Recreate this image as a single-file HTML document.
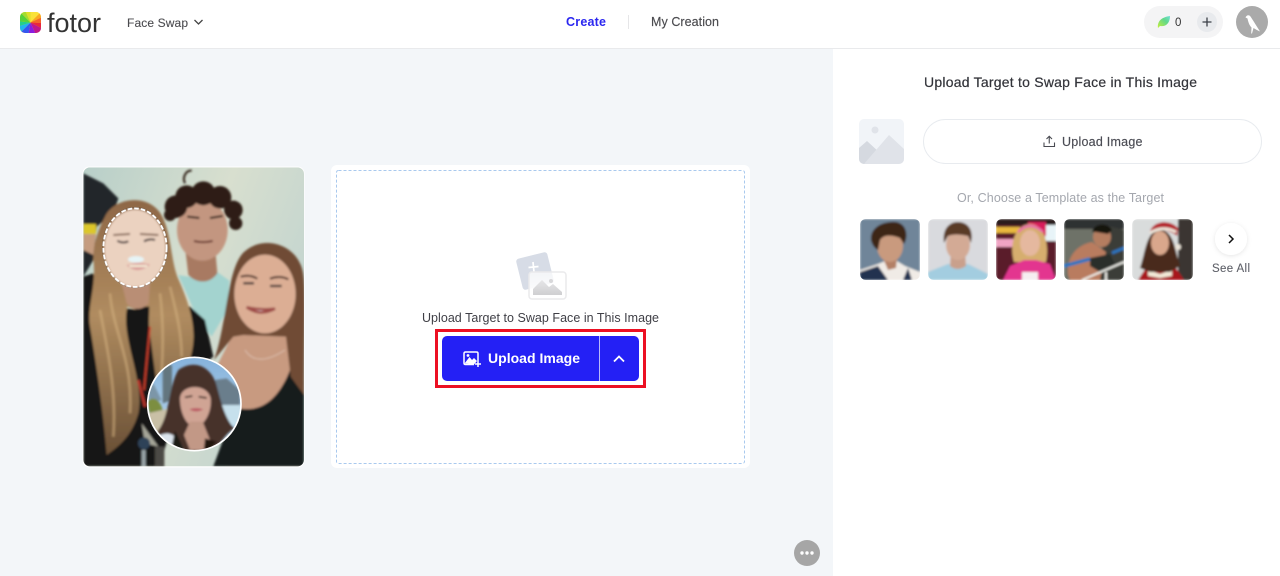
<!DOCTYPE html>
<html>
<head>
<meta charset="utf-8">
<style>
html,body{margin:0;padding:0;width:1280px;height:576px;overflow:hidden;background:#f3f6f9}
svg{display:block}
text{font-family:"Liberation Sans",sans-serif}
</style>
</head>
<body>
<svg width="1280" height="576" viewBox="0 0 1280 576" xmlns="http://www.w3.org/2000/svg">
<defs>
<filter id="b1" x="-10%" y="-10%" width="120%" height="120%"><feGaussianBlur stdDeviation="3"/></filter>
<filter id="b2" x="-10%" y="-10%" width="120%" height="120%"><feGaussianBlur stdDeviation="1"/></filter>
<filter id="sh" x="-30%" y="-30%" width="160%" height="160%"><feDropShadow dx="0" dy="1" stdDeviation="2.5" flood-color="#000" flood-opacity=".1"/></filter>
<clipPath id="ph"><rect x="40" y="22" width="662" height="897" rx="20"/></clipPath>
<clipPath id="cc"><circle cx="373" cy="732" r="140"/></clipPath>
<clipPath id="lg"><rect x="20" y="12" width="21" height="21" rx="5"/></clipPath>
<clipPath id="t1"><rect x="860" y="219" width="60" height="61" rx="6"/></clipPath>
<clipPath id="t2"><rect x="928" y="219" width="60" height="61" rx="6"/></clipPath>
<clipPath id="t3"><rect x="996" y="219" width="60" height="61" rx="6"/></clipPath>
<clipPath id="t4"><rect x="1064" y="219" width="60" height="61" rx="6"/></clipPath>
<clipPath id="t5"><rect x="1132" y="219" width="61" height="61" rx="6"/></clipPath>
<clipPath id="ph2"><rect x="859" y="119" width="45" height="45" rx="5"/></clipPath>
<linearGradient id="sky" x1="0" y1="0" x2="1" y2=".5"><stop offset="0" stop-color="#b8cfc9"/><stop offset=".55" stop-color="#d8dfcf"/><stop offset="1" stop-color="#c2d4cf"/></linearGradient>
<linearGradient id="hair" x1="0" y1="0" x2="0" y2="1"><stop offset="0" stop-color="#8e6746"/><stop offset=".45" stop-color="#b08c60"/><stop offset="1" stop-color="#6a5036"/></linearGradient>
<linearGradient id="csky" x1="0" y1="0" x2="0" y2="1"><stop offset="0" stop-color="#85b2dc"/><stop offset="1" stop-color="#c2dcec"/></linearGradient>
<linearGradient id="leaf" x1="0" y1="1" x2="1" y2="0"><stop offset="0" stop-color="#c4ef3c"/><stop offset=".6" stop-color="#62d88a"/><stop offset="1" stop-color="#6fe0d8"/></linearGradient>
<linearGradient id="fade" x1="0" y1="0" x2="0" y2="1"><stop offset="0" stop-color="#e6e6e8"/><stop offset="1" stop-color="#cfcfd1"/></linearGradient>
<linearGradient id="frame" x1="0" y1="0" x2="0" y2="1"><stop offset="0" stop-color="#fff" stop-opacity=".7"/><stop offset="1" stop-color="#fff"/></linearGradient>
</defs>

<!-- backgrounds -->
<rect width="1280" height="576" fill="#f3f6f9"/>
<rect x="833" y="48" width="447" height="528" fill="#fff"/>
<rect width="1280" height="48" fill="#fff"/>
<rect y="48" width="1280" height="1" fill="#e9eaec"/>

<!-- logo -->
<g clip-path="url(#lg)">
<rect x="20" y="12" width="21" height="21" fill="#f5d327"/>
<path d="M30.5 22.5L30.5 8L45 8Z" fill="#f9e23a"/>
<path d="M30.5 22.5L45 8L45 16Z" fill="#f9a825"/>
<path d="M30.5 22.5L45 16L45 23Z" fill="#f5652a"/>
<path d="M30.5 22.5L45 23L45 30Z" fill="#e9283c"/>
<path d="M30.5 22.5L45 30L45 37L37 37Z" fill="#c0158c"/>
<path d="M30.5 22.5L37 37L28 37Z" fill="#8a1de0"/>
<path d="M30.5 22.5L28 37L16 37Z" fill="#3556f0"/>
<path d="M30.5 22.5L16 37L16 27Z" fill="#1fb4ec"/>
<path d="M30.5 22.5L16 27L16 21Z" fill="#23cf8a"/>
<path d="M30.5 22.5L16 21L16 8Z" fill="#55d23a"/>
<path d="M30.5 22.5L16 8L24 8Z" fill="#a5dc2f"/>
<path d="M30.5 22.5L24 8L30.5 8Z" fill="#dde02c"/>
</g>
<text x="47" y="32" font-size="27" fill="#333" textLength="54" lengthAdjust="spacingAndGlyphs">fotor</text>

<!-- nav -->
<text x="127" y="27" font-size="12" fill="#4b4b4f" stroke="#4b4b4f" stroke-width=".1" textLength="61">Face Swap</text>
<path d="M194.500 20L198.500 24L202.500 20" fill="none" stroke="#444" stroke-width="1.300"/>
<text x="566" y="26" font-size="12.5" font-weight="bold" fill="#2b27f0" textLength="40">Create</text>
<rect x="628" y="15" width="1" height="14" fill="#e6e6e8"/>
<text x="651" y="26" font-size="12.500" fill="#4b4b4f" stroke="#4b4b4f" stroke-width=".15" textLength="68">My Creation</text>

<!-- credits -->
<rect x="1144" y="6" width="79" height="32" rx="16" fill="#f4f4f5"/>
<path d="M1158 28C1157 21 1162 17 1170 16C1170 23 1166 27 1160 26Z" fill="url(#leaf)"/>
<text x="1175" y="26" font-size="11.500" fill="#333">0</text>
<circle cx="1207" cy="22" r="10" fill="#e8eaed"/>
<path d="M1202.500 22H1211.500M1207 17.500V26.500" stroke="#3c4048" stroke-width="1.300"/>
<circle cx="1252" cy="22" r="16" fill="#aaaaaa"/>
<path d="M1245.500 17.500C1246.500 15 1249 14.500 1250.500 16.500C1252.500 19.500 1256 25 1260 31.500C1257 30 1255 29 1253.500 28L1252 33.500L1251.200 33.500L1251.500 27.500C1249 25 1248 21 1247.500 18.500Z" fill="#fff"/>

<!-- left photo card -->
<rect x="82.500" y="166.500" width="222" height="301" rx="7" fill="#fff"/>
<g transform="translate(70 160) scale(.33333)">
<g clip-path="url(#ph)">
<rect x="40" y="22" width="662" height="897" fill="url(#sky)"/>
<g filter="url(#b1)">
<path d="M40 40L100 70L145 115L130 160L80 200L70 300L40 350Z" fill="#24262a"/>
<rect x="40" y="192" width="38" height="30" fill="#dcc72a"/>
<path d="M40 222L78 222L70 285L40 270Z" fill="#c59c80"/>
<!-- right girl body -->
<path d="M470 919L440 620L500 500L650 510L702 640V919Z" fill="#c89a80"/>
<path d="M430 919L495 742C560 760 620 735 662 625L702 690V919Z" fill="#191b1d"/>
<!-- boy -->
<path d="M325 345L385 355L440 335L478 362L472 450L425 530L380 470Z" fill="#a3d3cf"/>
<path d="M345 260H435L442 340C420 372 380 372 355 345Z" fill="#a87a62"/>
<ellipse cx="397" cy="210" rx="76" ry="92" fill="#c39680"/>
<g fill="#2e1f16">
<circle cx="318" cy="140" r="34"/><circle cx="350" cy="110" r="34"/><circle cx="400" cy="100" r="36"/>
<circle cx="450" cy="112" r="34"/><circle cx="490" cy="150" r="28"/><circle cx="497" cy="190" r="20"/><circle cx="300" cy="165" r="18"/>
</g>
<path d="M345 70C335 50 350 30 365 32" fill="none" stroke="#2e1f16" stroke-width="6"/>
<path d="M352 170L388 174M420 174L458 168" stroke="#2e1f16" stroke-width="6"/>
<path d="M372 243Q398 250 428 243" stroke="#6b3a30" stroke-width="6" fill="none"/>
<!-- right girl -->
<path d="M432 600C470 500 470 330 520 278C570 228 660 245 690 310C712 350 702 450 702 705L662 650L648 530L520 525L490 530Z" fill="#6f4c34"/>
<ellipse cx="585" cy="402" rx="92" ry="118" fill="#dcae94"/>
<path d="M512 350Q540 342 562 356M600 356Q630 345 655 358" stroke="#4a2f26" stroke-width="6" fill="none"/>
<path d="M520 370H552M600 378H635" stroke="#4a3a38" stroke-width="7"/>
<path d="M530 442Q570 470 615 446Q575 452 530 442Z" fill="#fff" stroke="#a04e48" stroke-width="8"/>
<path d="M525 570Q560 625 645 570" stroke="#dcbfae" stroke-width="3" fill="none"/>
<!-- left girl clothes -->
<path d="M40 350L70 340L100 440L220 450L360 440L405 480L430 590L340 660L270 919H40Z" fill="#191719"/>
<!-- left girl hair -->
<path d="M105 170C130 115 225 100 268 155C305 210 300 290 322 350C358 430 385 510 362 590C340 625 300 660 262 690L232 460L172 440C150 530 225 660 205 760C185 830 145 860 110 885C100 760 80 620 60 500C50 440 80 380 70 300C70 240 90 200 105 170Z" fill="url(#hair)"/>
<path d="M120 400C130 520 190 600 180 760M90 450C110 560 140 680 130 830M300 380C320 460 335 520 335 590M270 400C280 480 280 560 275 640" stroke="#d6b282" stroke-width="8" fill="none" opacity=".55"/>
<path d="M195 440L238 440L235 540C215 520 205 480 195 440Z" fill="#191719"/>
<path d="M155 370H240L236 430C215 452 190 452 170 430Z" fill="#b98e74"/>
<ellipse cx="195" cy="265" rx="92" ry="116" fill="#ebd2c0"/>
<path d="M130 225L180 222M210 222L265 225" stroke="#7a5a48" stroke-width="5"/>
<path d="M142 242Q158 252 175 244M222 244Q238 235 255 240" stroke="#4a3c3c" stroke-width="6" fill="none"/>
<path d="M170 316Q205 302 240 314Q205 345 170 316Z" fill="#d99a98"/>
<path d="M178 318H232" stroke="#f4efd8" stroke-width="7"/>
<ellipse cx="198" cy="298" rx="24" ry="10" fill="#e6f4f6"/>
<path d="M240 500L222 690" stroke="#c43c2c" stroke-width="6"/>
<path d="M205 660L225 740" stroke="#b8352a" stroke-width="8"/>
<path d="M215 790L265 860L225 850Z" fill="#a5a598"/>
<ellipse cx="222" cy="850" rx="18" ry="18" fill="#2d4258"/>
<rect x="255" y="860" width="28" height="60" fill="#4c4a44"/>
<rect x="215" y="870" width="12" height="50" fill="#99a4a8"/>
</g>
<ellipse cx="195" cy="263" rx="95" ry="118" fill="none" stroke="#fff" stroke-width="6" stroke-dasharray="14 6"/>
<ellipse cx="195" cy="263" rx="98" ry="121" fill="none" stroke="#1c1c1c" stroke-width="1.500" opacity=".35"/>
</g>
<!-- inset portrait -->
<g clip-path="url(#cc)">
<rect x="230" y="590" width="290" height="290" fill="url(#csky)"/>
<g filter="url(#b1)">
<path d="M278 615H306L306 720L278 730Z" fill="#64767f"/>
<path d="M234 690L250 670L275 720L240 730Z" fill="#7c96a8"/>
<path d="M435 660L470 655L510 690V735H435Z" fill="#6a7e8c"/>
<rect x="440" y="735" width="80" height="60" fill="#c6e0ec"/>
<path d="M232 725C250 705 270 720 278 750L240 770Z" fill="#7c8e3f"/>
<path d="M232 760L300 745L270 820L250 830Z" fill="#c9c0a6"/>
<path d="M262 815C300 770 295 680 325 630C365 600 418 612 438 670C452 720 462 770 492 805C455 830 445 870 410 885H310Z" fill="#46302a"/>
<path d="M330 715C332 672 412 668 422 715C426 760 400 800 376 800C350 800 330 760 330 715Z" fill="#d0a494"/>
<path d="M345 712L367 708M386 710L410 714" stroke="#3c2a24" stroke-width="5"/>
<path d="M358 748Q378 741 400 748Q378 760 358 748Z" fill="#bb5a64"/>
<path d="M360 785H398L420 840L405 870H360L342 825Z" fill="#c29886"/>
<path d="M262 830C290 812 320 815 345 875H300Z" fill="#dde6ee"/>
<path d="M315 812L345 875L300 885Z" fill="#1f1a18"/>
<path d="M405 835L440 845L400 885Z" fill="#21140f"/>
</g>
</g>
<circle cx="373" cy="732" r="140" fill="none" stroke="#fff" stroke-width="5"/>
</g>

<!-- upload card -->
<rect x="331" y="165" width="419" height="303" rx="6" fill="#fff"/>
<rect x="336.500" y="170.500" width="408" height="293" rx="2" fill="none" stroke="#a9c9ee" stroke-width="1" stroke-dasharray="3 2"/>

<!-- upload illustration -->
<rect x="519" y="255" width="32" height="32" rx="3" transform="rotate(-14 535 271)" fill="#d7dce6"/>
<path d="M533 262L534 272M528.500 267.500L538.500 266.500" stroke="#fff" stroke-width="1.700"/>
<rect x="529" y="272" width="37" height="27" rx="3" fill="url(#frame)" stroke="#eaeaec" stroke-width="1.500"/>
<path d="M533 295V289L542 280L549 287L553 284L562 292V295Z" fill="url(#fade)"/>
<circle cx="551" cy="281" r="2" fill="#d8d8da"/>
<text x="422" y="322" font-size="12.5" fill="#3f3f46" textLength="237">Upload Target to Swap Face in This Image</text>

<!-- button -->
<rect x="436.500" y="330.500" width="208" height="56" fill="none" stroke="#ec1023" stroke-width="3"/>
<rect x="442" y="336" width="197" height="45" rx="5" fill="#2420f5"/>
<rect x="599" y="336" width="1" height="45" fill="#b9b8fb"/>
<path d="M478 361V353.500C478 352 477.500 352 476 352H465.500C464.500 352 464 352.500 464 353.500V363C464 364 464.500 364.500 465.500 364.500H474" fill="none" stroke="#fff" stroke-width="1.500"/>
<path d="M464.500 363.500L469.500 357L472 360L474 358L477 361L474 364.500Z" fill="#fff"/>
<circle cx="468" cy="355.500" r="1.400" fill="#fff"/>
<path d="M478 361V367M475 364H481" stroke="#fff" stroke-width="1.500"/>
<text x="488" y="363" font-size="14" font-weight="bold" fill="#fff" textLength="92">Upload Image</text>
<path d="M614 361.500L619 356.500L624 361.500" fill="none" stroke="#fff" stroke-width="1.800"/>

<!-- right panel -->
<text x="924" y="87" font-size="14" fill="#33343a" stroke="#33343a" stroke-width=".2" textLength="273">Upload Target to Swap Face in This Image</text>
<g clip-path="url(#ph2)">
<rect x="859" y="119" width="45" height="45" fill="#f1f4f8"/>
<circle cx="875" cy="130" r="3.500" fill="#e0e3e9"/>
<path d="M859 148L867 141L880 153L868 164H859Z" fill="#d5d9e0"/>
<path d="M864 164L889 135L904 149V164Z" fill="#e0e3e9"/>
</g>
<rect x="923.500" y="119.500" width="338" height="44" rx="22" fill="#fff" stroke="#e8ebef"/>
<path d="M1044 142.500V146.500H1054.500V142.500" fill="none" stroke="#4a4b52" stroke-width="1.100"/>
<path d="M1049.250 143.500V136.500M1046.500 139L1049.250 136.250L1052 139" fill="none" stroke="#4a4b52" stroke-width="1.100"/>
<text x="1062" y="146" font-size="12.500" fill="#4b4c54" stroke="#4b4c54" stroke-width=".15" textLength="80.500">Upload Image</text>
<text x="957" y="202" font-size="12.500" fill="#a4a7ae" textLength="207">Or, Choose a Template as the Target</text>

<!-- thumb 1 -->
<g clip-path="url(#t1)"><g filter="url(#b2)">
<rect x="860" y="219" width="60" height="61" fill="#6f8599"/>
<path d="M860 280V270L878 264L892 258L905 266L920 272V280Z" fill="#f0ebe6"/>
<path d="M860 272L878 266L888 280H860Z" fill="#22304f"/>
<path d="M908 268L912 280H903Z" fill="#22304f"/>
<path d="M883 258H897L896 268L888 270Z" fill="#b38066"/>
<ellipse cx="890" cy="246" rx="13" ry="16" fill="#c99a7e"/>
<path d="M871 240C870 226 885 221 896 222C908 224 908 238 904 244L900 238C892 235 884 234 880 240L878 250C874 248 872 244 871 240Z" fill="#3c2618"/>
</g></g>
<!-- thumb 2 -->
<g clip-path="url(#t2)"><g filter="url(#b2)">
<rect x="928" y="219" width="60" height="61" fill="#d9dade"/>
<path d="M928 280V272L948 264L968 264L988 274V280Z" fill="#a3cde0"/>
<path d="M951 252H965L966 266C960 270 955 270 950 266Z" fill="#c9a08c"/>
<ellipse cx="958" cy="245" rx="12" ry="15" fill="#d3aa95"/>
<path d="M944 243C942 228 950 222 958 222C968 222 974 230 971 243L968 236C960 234 952 234 948 236Z" fill="#5a3a27"/>
</g></g>
<!-- thumb 3 -->
<g clip-path="url(#t3)"><g filter="url(#b2)">
<rect x="996" y="219" width="60" height="61" fill="#5a1f2a"/>
<rect x="996" y="219" width="60" height="6" fill="#2c1a1c"/>
<rect x="996" y="227" width="24" height="6" fill="#e8b83c"/>
<rect x="996" y="239" width="18" height="8" fill="#f0a4c4"/>
<rect x="1045" y="225" width="11" height="16" fill="#e8f4f8"/>
<rect x="1028" y="222" width="18" height="14" fill="#d81f5c"/>
<path d="M1014 262C1008 240 1018 224 1030 224C1042 224 1050 240 1046 262Z" fill="#d6ae6e"/>
<ellipse cx="1030" cy="243" rx="10" ry="13" fill="#e5b89f"/>
<path d="M1018 232Q1030 220 1043 232" stroke="#ea6fa7" stroke-width="2.500" fill="none"/>
<path d="M1003 280L1010 266L1024 260L1036 260L1050 264L1056 280Z" fill="#e3358f"/>
<path d="M1022 272H1038V280H1022Z" fill="#f6eef0"/>
</g></g>
<!-- thumb 4 -->
<g clip-path="url(#t4)"><g filter="url(#b2)">
<rect x="1064" y="219" width="60" height="61" fill="#6e7268"/>
<rect x="1064" y="219" width="60" height="10" fill="#2f3230"/>
<path d="M1104 225L1124 230V280H1100Z" fill="#3a3e38"/>
<path d="M1068 275C1066 258 1076 245 1092 242L1106 252L1100 280H1070Z" fill="#b97c5e"/>
<ellipse cx="1102" cy="237" rx="9" ry="10" fill="#b47d60"/>
<path d="M1092 232C1094 223 1108 222 1112 230L1108 234L1096 232Z" fill="#17130f"/>
<path d="M1090 258L1110 254L1116 266L1100 272L1090 266Z" fill="#2c2f2a"/>
<path d="M1064 266L1090 259" stroke="#2a75c0" stroke-width="3.500"/>
<path d="M1112 253L1124 248" stroke="#2a75c0" stroke-width="3"/>
<path d="M1082 280L1124 262" stroke="#f0f0ea" stroke-width="2"/>
<path d="M1106 272V280" stroke="#f0f0ea" stroke-width="2"/>
</g></g>
<!-- thumb 5 -->
<g clip-path="url(#t5)"><g filter="url(#b2)">
<rect x="1132" y="219" width="61" height="61" fill="#d9dcdc"/>
<rect x="1178" y="219" width="15" height="61" fill="#3a3633"/>
<path d="M1138 280L1146 268L1176 268L1184 280Z" fill="#a8161f"/>
<path d="M1148 270L1160 274L1172 270L1172 276L1160 278L1148 276Z" fill="#f2ead8"/>
<path d="M1140 268C1146 250 1146 232 1160 229C1175 232 1175 252 1180 266L1170 272L1150 272Z" fill="#4a2a1a"/>
<ellipse cx="1160" cy="243" rx="9" ry="12" fill="#d9a78c"/>
<path d="M1150 232C1152 222 1168 218 1178 228L1177 236C1170 230 1158 228 1150 232Z" fill="#b5232a"/>
<path d="M1150 233Q1163 225 1176 232" stroke="#eee6da" stroke-width="3" fill="none"/>
<circle cx="1178" cy="247" r="3" fill="#ece5da"/>
</g></g>

<!-- next -->
<circle cx="1231" cy="239" r="16" fill="#fff" filter="url(#sh)"/>
<path d="M1229 235L1233 239L1229 243" fill="none" stroke="#111" stroke-width="1.500"/>
<text x="1212" y="272" font-size="11.500" fill="#5e6068" stroke="#5e6068" stroke-width=".1" textLength="38">See All</text>

<!-- more -->
<circle cx="807" cy="553" r="13" fill="#a6a6a6"/>
<circle cx="802" cy="553" r="1.700" fill="#fff"/>
<circle cx="807" cy="553" r="1.700" fill="#fff"/>
<circle cx="812" cy="553" r="1.700" fill="#fff"/>
</svg>
</body>
</html>
